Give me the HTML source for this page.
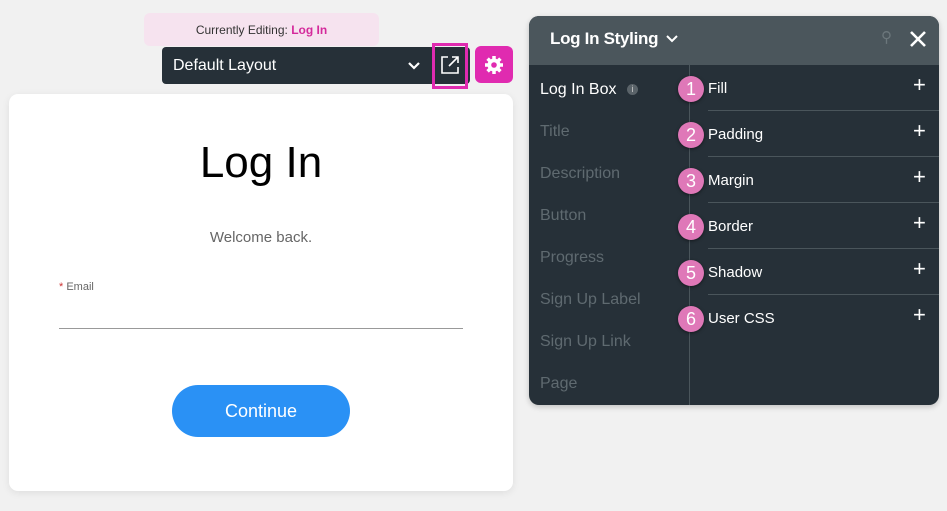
<!DOCTYPE html>
<html><head><style>
body{margin:0;width:947px;height:511px;background:#f1f1f1;font-family:"Liberation Sans",sans-serif;position:relative;overflow:hidden}
.a{position:absolute}
.card{left:9px;top:94px;width:504px;height:397px;background:#fff;border-radius:9px;box-shadow:0 2px 8px rgba(0,0,0,.08)}
.panel{left:529px;top:16px;width:410px;height:389px;background:#263038;border-radius:10px;overflow:hidden;box-shadow:0 2px 6px rgba(0,0,0,.2)}
.hd{left:0;top:0;width:410px;height:49px;background:#4b565c}
.l{left:11px;color:#5f6a70;font-size:16px}
.row{left:179px;width:231px;height:46px;border-bottom:1px solid #4a555b}
.num{left:149px;width:26px;height:26px;border-radius:50%;background:#df78b8;color:#fff;font-size:18px;text-align:center;line-height:26px;box-shadow:0 1px 3px rgba(0,0,0,.5)}
.lab{left:179px;color:#fff;font-size:15px}
.plus{left:384px;color:#fff;font-size:22px;font-weight:300}
</style></head><body>
<div class="a" style="left:144px;top:13px;width:235px;height:33px;background:#f6e3ef;border-radius:6px;font-size:12px;color:#333;text-align:center;line-height:35px">Currently Editing: <span style="color:#d42a9b;font-weight:bold">Log In</span></div>
<div class="a" style="left:162px;top:47px;width:308px;height:37px;background:#263038;border-radius:4px"></div>
<div class="a" style="left:173px;top:57px;color:#fff;font-size:16px">Default Layout</div>
<svg class="a" style="left:406px;top:60px" width="16" height="12"><path d="M3 3l5 5 5-5" stroke="#fff" stroke-width="2.2" fill="none"/></svg>
<div class="a" style="left:432px;top:43px;width:36px;height:46px;border:3px solid #e02bb0;box-sizing:border-box"></div>
<svg class="a" style="left:440px;top:55px" width="20" height="20"><path d="M8 2H2v16h16v-6M12 2h6v6M18 2l-9 9" stroke="#fff" stroke-width="1.6" fill="none"/></svg>
<div class="a" style="left:475px;top:46px;width:38px;height:37px;background:#e02bb0;border-radius:6px"></div>
<svg class="a" style="left:484px;top:55px" width="20" height="20" viewBox="0 0 20 20"><g fill="#fff"><circle cx="10" cy="10" r="6.5"/><g stroke="#fff" stroke-width="3.5"><path d="M10 1v18M1 10h18M3.6 3.6l12.8 12.8M16.4 3.6L3.6 16.4"/></g></g><circle cx="10" cy="10" r="2.8" fill="#e02bb0"/></svg>
<div class="a card">
<div class="a" style="left:0;width:504px;top:44px;text-align:center;font-size:44px;color:#000">Log In</div>
<div class="a" style="left:0;width:504px;top:135px;text-align:center;font-size:15px;color:#666">Welcome back.</div>
<div class="a" style="left:50px;top:187px;font-size:11px;color:#666"><span style="color:#c33">*</span> Email</div>
<div class="a" style="left:50px;top:234px;width:404px;height:1px;background:#999"></div>
<div class="a" style="left:163px;top:291px;width:178px;height:52px;background:#2a91f5;border-radius:26px;color:#fff;font-size:18px;text-align:center;line-height:52px">Continue</div>
</div>
<div class="a panel">
<div class="a hd"></div>
<div class="a" style="left:21px;top:13px;color:#fff;font-size:17px;font-weight:bold;letter-spacing:-0.3px">Log In Styling</div>
<svg class="a" style="left:136px;top:17px" width="14" height="12"><path d="M2 3l5 5 5-5" stroke="#fff" stroke-width="2" fill="none"/></svg>
<div class="a" style="left:352px;top:12px;color:#6c777c;font-size:15px">⚲</div>
<svg class="a" style="left:380px;top:14px" width="18" height="18"><path d="M2 2l14 14M16 2L2 16" stroke="#fff" stroke-width="2.6"/></svg>
<div class="a" style="left:160px;top:49px;width:1px;height:340px;background:#4a555b"></div>
<div class="a l" style="top:65px;color:#fff">Log In Box <span style="display:inline-block;width:11px;height:11px;border-radius:50%;background:#5a6369;color:#ccc;font-size:9px;text-align:center;line-height:11px;vertical-align:2px;margin-left:6px">i</span></div>
<div class="a l" style="top:107px">Title</div>
<div class="a l" style="top:149px">Description</div>
<div class="a l" style="top:191px">Button</div>
<div class="a l" style="top:233px">Progress</div>
<div class="a l" style="top:275px">Sign Up Label</div>
<div class="a l" style="top:317px">Sign Up Link</div>
<div class="a l" style="top:359px">Page</div>
<div class="a row" style="top:48px"></div><div class="a row" style="top:94px"></div><div class="a row" style="top:140px"></div><div class="a row" style="top:186px"></div><div class="a row" style="top:232px"></div>
<div class="a num" style="top:60px">1</div><div class="a lab" style="top:64px">Fill</div><div class="a plus" style="top:56px">+</div>
<div class="a num" style="top:106px">2</div><div class="a lab" style="top:110px">Padding</div><div class="a plus" style="top:102px">+</div>
<div class="a num" style="top:152px">3</div><div class="a lab" style="top:156px">Margin</div><div class="a plus" style="top:148px">+</div>
<div class="a num" style="top:198px">4</div><div class="a lab" style="top:202px">Border</div><div class="a plus" style="top:194px">+</div>
<div class="a num" style="top:244px">5</div><div class="a lab" style="top:248px">Shadow</div><div class="a plus" style="top:240px">+</div>
<div class="a num" style="top:290px">6</div><div class="a lab" style="top:294px">User CSS</div><div class="a plus" style="top:286px">+</div>
</div>
</body></html>
